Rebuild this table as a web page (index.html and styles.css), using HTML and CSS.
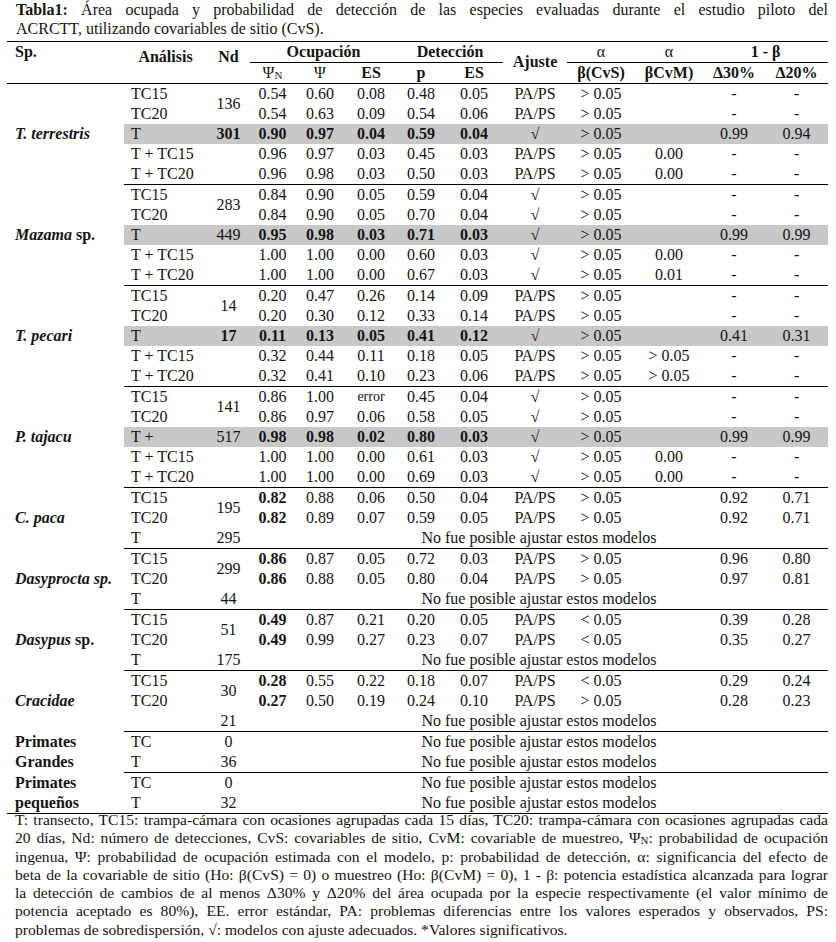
FILE: index.html
```html
<!DOCTYPE html>
<html lang="es">
<head>
<meta charset="utf-8">
<title>Tabla1</title>
<link rel="stylesheet" href="styles.css">
</head>
<body>
<div class="page">
  <p class="title">
    <span class="jl"><b>Tabla1:</b> Área ocupada y probabilidad de detección de las especies evaluadas durante el estudio piloto del</span>
    <span class="ll">ACRCTT, utilizando covariables de sitio (CvS).</span>
  </p>
  <table class="data">
    <colgroup>
      <col class="c-sp"><col class="c-an"><col class="c-nd"><col class="c-psin"><col class="c-psi"><col class="c-es"><col class="c-p"><col class="c-es2"><col class="c-aj"><col class="c-cvs"><col class="c-cvm"><col class="c-d30"><col class="c-d20">
    </colgroup>
    <thead>
      <tr class="h1">
        <th rowspan="2" class="sp-h">Sp.</th>
        <th rowspan="2" class="mid-h">Análisis</th>
        <th rowspan="2" class="mid-h">Nd</th>
        <th colspan="3" class="grp">Ocupación</th>
        <th colspan="2" class="grp">Detección</th>
        <th rowspan="2" class="aj-h">Ajuste</th>
        <th class="grp thin">α</th>
        <th class="grp thin">α</th>
        <th colspan="2" class="grp">1 - β</th>
      </tr>
      <tr class="h2">
        <th class="thin">Ψ<span class="sub">N</span></th>
        <th class="thin">Ψ</th>
        <th>ES</th>
        <th>p</th>
        <th>ES</th>
        <th>β(CvS)</th>
        <th>βCvM)</th>
        <th>Δ30%</th>
        <th>Δ20%</th>
      </tr>
    </thead>
    <tbody>
      <tr><td rowspan="5" class="sp"><i>T. terrestris</i></td><td class="an">TC15</td><td rowspan="2">136</td><td>0.54</td><td>0.60</td><td>0.08</td><td>0.48</td><td>0.05</td><td>PA/PS</td><td>&gt; 0.05</td><td></td><td>-</td><td>-</td></tr>
      <tr><td class="an">TC20</td><td>0.54</td><td>0.63</td><td>0.09</td><td>0.54</td><td>0.06</td><td>PA/PS</td><td>&gt; 0.05</td><td></td><td>-</td><td>-</td></tr>
      <tr class="hl"><td class="an">T</td><td class="b">301</td><td class="b">0.90</td><td class="b">0.97</td><td class="b">0.04</td><td class="b">0.59</td><td class="b">0.04</td><td>√</td><td>&gt; 0.05</td><td></td><td>0.99</td><td>0.94</td></tr>
      <tr><td class="an">T + TC15</td><td></td><td>0.96</td><td>0.97</td><td>0.03</td><td>0.45</td><td>0.03</td><td>PA/PS</td><td>&gt; 0.05</td><td>0.00</td><td>-</td><td>-</td></tr>
      <tr><td class="an">T + TC20</td><td></td><td>0.96</td><td>0.98</td><td>0.03</td><td>0.50</td><td>0.03</td><td>PA/PS</td><td>&gt; 0.05</td><td>0.00</td><td>-</td><td>-</td></tr>
    </tbody>
    <tbody>
      <tr><td rowspan="5" class="sp"><i>Mazama</i> sp.</td><td class="an">TC15</td><td rowspan="2">283</td><td>0.84</td><td>0.90</td><td>0.05</td><td>0.59</td><td>0.04</td><td>√</td><td>&gt; 0.05</td><td></td><td>-</td><td>-</td></tr>
      <tr><td class="an">TC20</td><td>0.84</td><td>0.90</td><td>0.05</td><td>0.70</td><td>0.04</td><td>√</td><td>&gt; 0.05</td><td></td><td>-</td><td>-</td></tr>
      <tr class="hl"><td class="an">T</td><td>449</td><td class="b">0.95</td><td class="b">0.98</td><td class="b">0.03</td><td class="b">0.71</td><td class="b">0.03</td><td>√</td><td>&gt; 0.05</td><td></td><td>0.99</td><td>0.99</td></tr>
      <tr><td class="an">T + TC15</td><td></td><td>1.00</td><td>1.00</td><td>0.00</td><td>0.60</td><td>0.03</td><td>√</td><td>&gt; 0.05</td><td>0.00</td><td>-</td><td>-</td></tr>
      <tr><td class="an">T + TC20</td><td></td><td>1.00</td><td>1.00</td><td>0.00</td><td>0.67</td><td>0.03</td><td>√</td><td>&gt; 0.05</td><td>0.01</td><td>-</td><td>-</td></tr>
    </tbody>
    <tbody>
      <tr><td rowspan="5" class="sp"><i>T. pecari</i></td><td class="an">TC15</td><td rowspan="2">14</td><td>0.20</td><td>0.47</td><td>0.26</td><td>0.14</td><td>0.09</td><td>PA/PS</td><td>&gt; 0.05</td><td></td><td>-</td><td>-</td></tr>
      <tr><td class="an">TC20</td><td>0.20</td><td>0.30</td><td>0.12</td><td>0.33</td><td>0.14</td><td>PA/PS</td><td>&gt; 0.05</td><td></td><td>-</td><td>-</td></tr>
      <tr class="hl"><td class="an">T</td><td class="b">17</td><td class="b">0.11</td><td class="b">0.13</td><td class="b">0.05</td><td class="b">0.41</td><td class="b">0.12</td><td>√</td><td>&gt; 0.05</td><td></td><td>0.41</td><td>0.31</td></tr>
      <tr><td class="an">T + TC15</td><td></td><td>0.32</td><td>0.44</td><td>0.11</td><td>0.18</td><td>0.05</td><td>PA/PS</td><td>&gt; 0.05</td><td>&gt; 0.05</td><td>-</td><td>-</td></tr>
      <tr><td class="an">T + TC20</td><td></td><td>0.32</td><td>0.41</td><td>0.10</td><td>0.23</td><td>0.06</td><td>PA/PS</td><td>&gt; 0.05</td><td>&gt; 0.05</td><td>-</td><td>-</td></tr>
    </tbody>
    <tbody>
      <tr><td rowspan="5" class="sp"><i>P. tajacu</i></td><td class="an">TC15</td><td rowspan="2">141</td><td>0.86</td><td>1.00</td><td class="small">error</td><td>0.45</td><td>0.04</td><td>√</td><td>&gt; 0.05</td><td></td><td>-</td><td>-</td></tr>
      <tr><td class="an">TC20</td><td>0.86</td><td>0.97</td><td>0.06</td><td>0.58</td><td>0.05</td><td>√</td><td>&gt; 0.05</td><td></td><td>-</td><td>-</td></tr>
      <tr class="hl"><td class="an">T +</td><td>517</td><td class="b">0.98</td><td class="b">0.98</td><td class="b">0.02</td><td class="b">0.80</td><td class="b">0.03</td><td>√</td><td>&gt; 0.05</td><td></td><td>0.99</td><td>0.99</td></tr>
      <tr><td class="an">T + TC15</td><td></td><td>1.00</td><td>1.00</td><td>0.00</td><td>0.61</td><td>0.03</td><td>√</td><td>&gt; 0.05</td><td>0.00</td><td>-</td><td>-</td></tr>
      <tr><td class="an">T + TC20</td><td></td><td>1.00</td><td>1.00</td><td>0.00</td><td>0.69</td><td>0.03</td><td>√</td><td>&gt; 0.05</td><td>0.00</td><td>-</td><td>-</td></tr>
    </tbody>
    <tbody>
      <tr><td rowspan="3" class="sp"><i>C. paca</i></td><td class="an">TC15</td><td rowspan="2">195</td><td class="b">0.82</td><td>0.88</td><td>0.06</td><td>0.50</td><td>0.04</td><td>PA/PS</td><td>&gt; 0.05</td><td></td><td>0.92</td><td>0.71</td></tr>
      <tr><td class="an">TC20</td><td class="b">0.82</td><td>0.89</td><td>0.07</td><td>0.59</td><td>0.05</td><td>PA/PS</td><td>&gt; 0.05</td><td></td><td>0.92</td><td>0.71</td></tr>
      <tr><td class="an">T</td><td>295</td><td colspan="10">No fue posible ajustar estos modelos</td></tr>
    </tbody>
    <tbody>
      <tr><td rowspan="3" class="sp"><i>Dasyprocta sp.</i></td><td class="an">TC15</td><td rowspan="2">299</td><td class="b">0.86</td><td>0.87</td><td>0.05</td><td>0.72</td><td>0.03</td><td>PA/PS</td><td>&gt; 0.05</td><td></td><td>0.96</td><td>0.80</td></tr>
      <tr><td class="an">TC20</td><td class="b">0.86</td><td>0.88</td><td>0.05</td><td>0.80</td><td>0.04</td><td>PA/PS</td><td>&gt; 0.05</td><td></td><td>0.97</td><td>0.81</td></tr>
      <tr><td class="an">T</td><td>44</td><td colspan="10">No fue posible ajustar estos modelos</td></tr>
    </tbody>
    <tbody>
      <tr><td rowspan="3" class="sp"><i>Dasypus</i> sp.</td><td class="an">TC15</td><td rowspan="2">51</td><td class="b">0.49</td><td>0.87</td><td>0.21</td><td>0.20</td><td>0.05</td><td>PA/PS</td><td>&lt; 0.05</td><td></td><td>0.39</td><td>0.28</td></tr>
      <tr><td class="an">TC20</td><td class="b">0.49</td><td>0.99</td><td>0.27</td><td>0.23</td><td>0.07</td><td>PA/PS</td><td>&lt; 0.05</td><td></td><td>0.35</td><td>0.27</td></tr>
      <tr><td class="an">T</td><td>175</td><td colspan="10">No fue posible ajustar estos modelos</td></tr>
    </tbody>
    <tbody>
      <tr><td rowspan="3" class="sp"><i>Cracidae</i></td><td class="an">TC15</td><td rowspan="2">30</td><td class="b">0.28</td><td>0.55</td><td>0.22</td><td>0.18</td><td>0.07</td><td>PA/PS</td><td>&lt; 0.05</td><td></td><td>0.29</td><td>0.24</td></tr>
      <tr><td class="an">TC20</td><td class="b">0.27</td><td>0.50</td><td>0.19</td><td>0.24</td><td>0.10</td><td>PA/PS</td><td>&gt; 0.05</td><td></td><td>0.28</td><td>0.23</td></tr>
      <tr><td class="an"></td><td>21</td><td colspan="10">No fue posible ajustar estos modelos</td></tr>
    </tbody>
    <tbody>
      <tr><td rowspan="2" class="sp up">Primates<br>Grandes</td><td class="an">TC</td><td>0</td><td colspan="10">No fue posible ajustar estos modelos</td></tr>
      <tr><td class="an">T</td><td>36</td><td colspan="10">No fue posible ajustar estos modelos</td></tr>
    </tbody>
    <tbody class="last">
      <tr><td rowspan="2" class="sp up">Primates<br>pequeños</td><td class="an">TC</td><td>0</td><td colspan="10">No fue posible ajustar estos modelos</td></tr>
      <tr><td class="an">T</td><td>32</td><td colspan="10">No fue posible ajustar estos modelos</td></tr>
    </tbody>
  </table>
  <p class="note">
    <span class="jl">T: transecto, TC15: trampa-cámara con ocasiones agrupadas cada 15 días, TC20: trampa-cámara con ocasiones agrupadas cada</span>
    <span class="jl">20 días, Nd: número de detecciones, CvS: covariables de sitio, CvM: covariable de muestreo, Ψ<span class="sub">N</span>: probabilidad de ocupación</span>
    <span class="jl">ingenua, Ψ: probabilidad de ocupación estimada con el modelo, p: probabilidad de detección, α: significancia del efecto de</span>
    <span class="jl">beta de la covariable de sitio (Ho: β(CvS) = 0) o muestreo (Ho: β(CvM) = 0), 1 - β: potencia estadística alcanzada para lograr</span>
    <span class="jl">la detección de cambios de al menos Δ30% y Δ20% del área ocupada por la especie respectivamente (el valor mínimo de</span>
    <span class="jl">potencia aceptado es 80%), EE. error estándar, PA: problemas diferencias entre los valores esperados y observados, PS:</span>
    <span class="ll">problemas de sobredispersión, √: modelos con ajuste adecuados. *Valores significativos.</span>
  </p>
</div>
</body>
</html>
```

FILE: styles.css
```css
html, body {
  margin: 0;
  padding: 0;
  background: #ffffff;
}

body {
  color: #141414;
  font-family: "Liberation Serif", "Times New Roman", "DejaVu Serif", serif;
  font-size: 16px;
}

.page {
  width: 821px;
  padding: 0 8px 0 7px;
}

.title {
  margin: 0;
  padding-left: 9px;
  line-height: 19px;
  font-size: 16px;
}

.jl {
  display: block;
  text-align: justify;
  text-align-last: justify;
}

.ll {
  display: block;
  text-align: left;
}

.data {
  margin-top: 3px;
  width: 821px;
  border-collapse: collapse;
  table-layout: fixed;
}

.c-sp { width: 117px; }
.c-an { width: 83px; }
.c-nd { width: 43px; }
.c-psin { width: 45px; }
.c-psi { width: 50px; }
.c-es { width: 52px; }
.c-p { width: 48px; }
.c-es2 { width: 58px; }
.c-aj { width: 64px; }
.c-cvs { width: 68px; }
.c-cvm { width: 68px; }
.c-d30 { width: 62px; }
.c-d20 { width: 63px; }

.data th,
.data td {
  padding: 0;
  height: 20px;
  line-height: 20px;
  text-align: center;
  vertical-align: middle;
  white-space: nowrap;
}

.data thead {
  border-top: 1px solid #000;
  border-bottom: 1px solid #000;
}

.data th {
  font-weight: bold;
}

.data th.thin {
  font-weight: normal;
}

.data th.grp {
  border-bottom: 1px solid #000;
}

.data th.sp-h {
  text-align: left;
  padding-left: 8px;
  vertical-align: top;
  padding-top: 0;
}

.data th.mid-h {
  padding-bottom: 11px;
}

.data th.aj-h {
  padding-bottom: 2px;
}

.sub {
  font-size: 11px;
  line-height: 0;
  vertical-align: -1px;
}

.data td.sp {
  text-align: left;
  padding-left: 8px;
  font-weight: bold;
}

.data td.an {
  text-align: left;
  padding-left: 7px;
}

.data td.b {
  font-weight: bold;
}

.data td.small {
  font-size: 14px;
}

.data tbody tr:first-child td:not(.sp) {
  border-top: 1px solid #000;
}

.data tbody.last {
  border-bottom: 1px solid #000;
}

.data tr.hl td {
  background: #c8c8c8;
}

.note {
  margin: -3px 0 0 0;
  padding-left: 8px;
  line-height: 18.3px;
  font-size: 15.6px;
}
```
